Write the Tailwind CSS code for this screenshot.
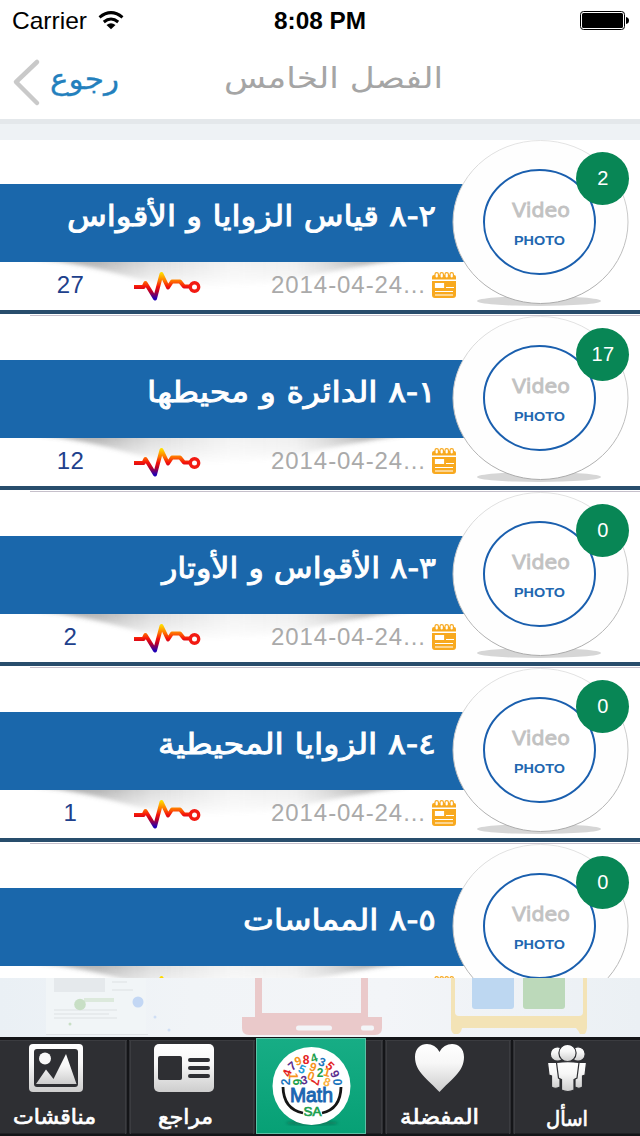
<!DOCTYPE html>
<html lang="ar">
<head>
<meta charset="utf-8">
<title>الفصل الخامس</title>
<script src="https://cdn.jsdelivr.net/npm/@tailwindcss/browser@4"></script>
</head>
<body class="w-[640px] h-[1136px] overflow-hidden bg-[#eef2f5] font-['Liberation_Sans',sans-serif]">
<div class="flex h-[1136px] flex-col overflow-hidden">
  <header class="h-[124px] shrink-0 border-b-[5px] border-[#e4e8eb] bg-white">
    <svg class="block" width="640" height="119">
      <text x="12" y="29" font-size="24" textLength="75" lengthAdjust="spacingAndGlyphs">Carrier</text>
      <g fill="none" stroke="#000" stroke-width="3"><path d="M99.500 17.300Q111 8 122.500 17.300M103.800 22Q111 16 118.200 22"/></g>
      <path d="M106.500 25Q111 21.500 115.500 25L111 29.200Z"/>
      <text x="274" y="29" font-size="24" font-weight="700" textLength="92" lengthAdjust="spacingAndGlyphs">8:08 PM</text>
      <rect x="580.500" y="11.500" width="44" height="18" rx="3" fill="none" stroke="#000"/>
      <rect x="582" y="13" width="41" height="15" rx="1.500"/><path d="M626 17q3 .5 3 3.500t-3 3.500z"/>
      <path d="M37 62L16 82L37 103" fill="none" stroke="#c9c9c9" stroke-width="4.500" stroke-linecap="round" stroke-linejoin="round"/>
      <g font-family="DejaVu Sans,sans-serif" direction="rtl">
        <text x="119" y="89" font-size="29" fill="#2380bd" stroke="#2380bd" stroke-width=".3" textLength="69" lengthAdjust="spacingAndGlyphs">رجوع</text>
        <text x="443" y="88" font-size="29" fill="#a5a5a5" textLength="219" lengthAdjust="spacingAndGlyphs">الفصل الخامس</text>
      </g>
    </svg>
  </header>
  <main id="list" class="mt-4 h-[838px] shrink-0 overflow-hidden bg-white"></main>
  <svg class="block shrink-0" width="640" height="59" viewBox="0 978 640 59">
    <defs><linearGradient id="bg"><stop stop-color="#eaf0f5"/><stop offset=".3" stop-color="#f1f4f7"/><stop offset=".6" stop-color="#f3f5f8"/><stop offset="1" stop-color="#ebf0f4"/></linearGradient></defs>
    <rect y="978" width="640" height="59" fill="url(#bg)"/>
    <rect x="46" y="978" width="100" height="56" fill="#f1f5f7"/><path d="M46 1034.500H148" stroke="#dfe2e5"/>
    <rect x="54" y="978" width="51" height="14" fill="#e5e9ec"/>
    <path d="M112 982h15M112 990h21M54 1010h63M54 1014h55M54 1018h63" stroke="#e3e7ea" stroke-width="1.500"/>
    <path d="M84 1000h30" stroke="#dce9dc" stroke-width="4"/>
    <circle cx="80" cy="1004.500" r="5.800" fill="#c8dfc5"/><circle cx="138" cy="1002" r="5.500" fill="#c3d7f4"/>
    <circle cx="70" cy="1024" r="1.500" fill="#c8dfc5"/><circle cx="155" cy="1017" r="1.500" fill="#cfdef5"/><circle cx="169" cy="1030" r="1.500" fill="#cfdef5"/>
    <path fill="#eac9ca" d="M255 978h7v35h99v-35h7v39h14v11q0 7-7 7H249q-7 0-7-7v-11h13z"/>
    <rect x="296" y="1025.500" width="36" height="5" rx="2.500" fill="#f3f5f8"/><rect x="361" y="1025.500" width="13" height="5" rx="2" fill="#f3f5f8"/>
    <path fill="#f3e3b6" d="M451 978h4v34q0 4 4 4h120q4 0 4-4v-34h4v50q-1 6-3 6h-4q-2-4-4-6H462q-1 5-4 6h-4q-3-2-3-6z"/>
    <path fill="#bdd7f1" d="M472 978h42v28q0 3-3 3h-36q-3 0-3-3z"/><path fill="#bcd9ba" d="M523 978h42v28q0 3-3 3h-36q-3 0-3-3z"/>
  </svg>
  <nav class="h-[99px] shrink-0">
    <svg class="block" width="640" height="99" viewBox="0 1037 640 99">
      <defs>
        <linearGradient id="w" x2="0" y2="1"><stop stop-color="#fff"/><stop offset=".4" stop-color="#f7f7f7"/><stop offset="1" stop-color="#cdcdcd"/></linearGradient>
        <linearGradient id="g" x2="0" y2="1"><stop stop-color="#17ad85"/><stop offset="1" stop-color="#07a075"/></linearGradient>
        <filter id="b"><feGaussianBlur stdDeviation="1.500"/></filter>
      </defs>
      <rect y="1037" width="640" height="99" fill="#2e2f33"/>
      <path d="M0 1038.500H640M0 1135H640" stroke="#141518" stroke-width="3"/><path d="M0 1040.500H640" stroke="#3b3c40"/>
      <path d="M128 1038v98M256 1038v98M384 1038v98M512 1038v98" stroke="#141518" stroke-width="2"/>
      <path d="M125.500 1040v94M130.500 1040v94M253.500 1040v94M381.500 1040v94M386.500 1040v94M509.500 1040v94M514.500 1040v94" stroke="#3b3c40"/>
      <rect x="256.500" y="1038.500" width="109" height="95" fill="url(#g)" stroke="#5cc0a5"/>
      <ellipse cx="312" cy="1123" rx="26" ry="2.500" fill="#087b5b" filter="url(#b)"/>
      <circle cx="311.500" cy="1086" r="39" fill="#fff"/>
      <g id="nums" font-family="Liberation Sans,sans-serif" font-weight="700" text-anchor="middle"></g>
      <path d="M283 1087Q283.500 1109 303 1113M341 1087Q340.500 1109 322 1113" fill="none" stroke="#151515" stroke-width="2.800"/>
      <text x="290" y="1102" font-size="20" font-family="Liberation Sans,sans-serif" fill="#1b66b1" stroke="#1b66b1" stroke-width="1" textLength="43" lengthAdjust="spacingAndGlyphs">Math</text>
      <text x="303.500" y="1116" font-size="13" font-family="Liberation Sans,sans-serif" fill="#1da04f" stroke="#1da04f" stroke-width=".7" textLength="18" lengthAdjust="spacingAndGlyphs">SA</text>
      <rect x="29" y="1044" width="54" height="48" rx="4" fill="url(#w)"/><rect x="34" y="1049" width="44" height="38" rx="3" fill="#2e2f33"/>
      <circle cx="45" cy="1058.500" r="6" fill="#f8f8f8"/><path d="M36 1084L46 1069.500L53.500 1079L66 1054L76.500 1084Z" fill="url(#w)"/>
      <rect x="154" y="1044" width="60" height="48" rx="5" fill="url(#w)"/><rect x="158" y="1056" width="24" height="24" rx="2" fill="#2e2f33"/>
      <path d="M190 1060h18M190 1068h18M190 1076h18" stroke="#2e2f33" stroke-width="4" stroke-linecap="round"/>
      <path d="M439.500 1092C428 1079 415 1072 415 1057C415 1041 434 1040 439.500 1052C445 1040 464 1041 464 1057C464 1072 451 1079 439.500 1092Z" fill="url(#w)"/>
      <g fill="url(#w)" stroke="#2e2f33" stroke-width="1.200">
        <circle cx="557.500" cy="1054" r="7.200"/><circle cx="578" cy="1054" r="7.200"/>
        <path d="M547.500 1062.500H560V1087Q556 1089.500 551.500 1087V1076L549 1075ZM586.500 1062.500H575V1087Q579 1089.500 582.500 1087V1076L585 1075Z"/>
        <circle cx="567.500" cy="1053" r="8.600"/>
        <path d="M556.500 1062.500Q568 1061 579 1062.500L577 1078L574 1079.500V1090Q568 1093 561.500 1090V1079.500L558.500 1078Z"/>
      </g>
      <g font-family="DejaVu Sans,sans-serif" direction="rtl" fill="#fff" stroke="#fff" stroke-width=".7" font-size="21">
        <text x="96" y="1124" textLength="83" lengthAdjust="spacingAndGlyphs">مناقشات</text>
        <text x="213" y="1124" textLength="55" lengthAdjust="spacingAndGlyphs">مراجع</text>
        <text x="479" y="1124" textLength="79" lengthAdjust="spacingAndGlyphs">المفضلة</text>
        <text x="588" y="1126" textLength="42" lengthAdjust="spacingAndGlyphs">اسأل</text>
      </g>
    </svg>
  </nav>
</div>
<svg width="0" height="0" class="absolute">
  <defs>
    <linearGradient id="heat" gradientUnits="userSpaceOnUse" x1="0" y1="132" x2="0" y2="160"><stop stop-color="#ffe800"/><stop offset=".3" stop-color="#ff7a00"/><stop offset=".52" stop-color="#f5140a"/><stop offset=".7" stop-color="#b8002c"/><stop offset=".95" stop-color="#2100b4"/></linearGradient>
    <linearGradient id="sh" gradientUnits="userSpaceOnUse" x1="35" y1="0" x2="430" y2="0"><stop stop-color="#555" stop-opacity=".5"/><stop offset=".17" stop-color="#555" stop-opacity=".42"/><stop offset=".3" stop-color="#666" stop-opacity=".22"/><stop offset=".5" stop-color="#888" stop-opacity=".1"/><stop offset=".66" stop-color="#888" stop-opacity=".14"/><stop offset=".84" stop-color="#555" stop-opacity=".42"/><stop offset="1" stop-color="#555" stop-opacity=".4"/></linearGradient>
    <linearGradient id="fade" gradientUnits="userSpaceOnUse" x1="0" y1="122" x2="0" y2="150"><stop stop-color="#fff"/><stop offset=".45" stop-color="#999"/><stop offset="1" stop-color="#000"/></linearGradient>
    <mask id="under" maskUnits="userSpaceOnUse" x="0" y="122" width="640" height="48"><rect y="122" width="640" height="48" fill="url(#fade)"/></mask>
    <filter id="soft" x="-10%" y="-60%" width="120%" height="220%"><feGaussianBlur stdDeviation="2"/></filter>
    <g id="row">
      <g mask="url(#under)"><path d="M32 118Q85 124 132 138Q160 146 210 148Q270 146 310 136Q370 124 412 118Z" fill="url(#sh)" filter="url(#soft)"/></g>
      <rect y="44" width="480" height="78" fill="#1a67ab"/>
      <path d="M134 147H143.500L145.500 143L155 158.500L161.500 134L168 147.500L172 141.500H180L184 146.500H190" fill="none" stroke="url(#heat)" stroke-width="4" stroke-linejoin="round"/>
      <circle cx="194.500" cy="147" r="4.200" fill="none" stroke="#f21a12" stroke-width="3.400"/>
      <path d="M434 135h20q2 0 2 2v2.500h-24v-2.500q0-2 2-2zM432 141h24v14q0 3-3 3h-18q-3 0-3-3z" fill="#f8a91f"/>
      <path d="M435.500 143.500h8v4h-8zM446 147.500h8M435 151.500h18M435 155h18" stroke="#fff" stroke-width="1.200" fill="#fff"/>
      <g fill="#fff" stroke="#f8a91f" stroke-width="1.200"><rect x="435" y="132.600" width="3.400" height="5.500" rx="1.700"/><rect x="440" y="132.600" width="3.400" height="5.500" rx="1.700"/><rect x="445" y="132.600" width="3.400" height="5.500" rx="1.700"/><rect x="450" y="132.600" width="3.400" height="5.500" rx="1.700"/></g>
      <ellipse cx="539" cy="161" rx="62" ry="5" fill="#d6d6d6"/>
      <ellipse cx="540.500" cy="82" rx="87.500" ry="81.500" fill="#fefefe" stroke="url(#rim)"/>
      <ellipse cx="539.500" cy="82" rx="55.500" ry="52" fill="#fff" stroke="#1a5fae" stroke-width="2"/>
      <circle cx="602.500" cy="38.500" r="26.500" fill="#088655"/>
      <rect y="170" width="640" height="4" fill="#284d6c"/><path d="M30 175.500H640" stroke="#c6c0cb"/>
    </g>
    <linearGradient id="rim" x2="0" y2="1"><stop stop-color="#e4e4e4"/><stop offset="1" stop-color="#aaa"/></linearGradient>
  </defs>
</svg>
<script>
const rows=[["٢-٨ قياس الزوايا و الأقواس",67,27,2],["١-٨ الدائرة و محيطها",147,12,17],["٣-٨ الأقواس و الأوتار",162,2,0],["٤-٨ الزوايا المحيطية",158,1,0],["٥-٨ المماسات",243,"",0]];
document.getElementById("list").innerHTML=rows.map(([t,x,n,b])=>`<svg class="block" width="640" height="176"><use href="#row"/>
<text x="436" y="86" direction="rtl" font-family="DejaVu Sans,sans-serif" font-size="29" fill="#fff" stroke="#fff" stroke-width=".9" textLength="${436-x}" lengthAdjust="spacingAndGlyphs">${t}</text>
${n===""?"":`<text x="70.500" y="153" text-anchor="middle" font-size="24" letter-spacing=".5" fill="#20408c">${n}</text>
<text x="271" y="153" font-size="24" fill="#aaa" textLength="154">2014-04-24...</text>`}
<text x="512" y="77" font-family="DejaVu Sans,sans-serif" font-size="19.500" fill="#c2c2c2" stroke="#c2c2c2" stroke-width=".8" textLength="58" lengthAdjust="spacingAndGlyphs">Video</text>
<text x="514" y="104.500" font-size="13.500" font-weight="700" fill="#2267b0" textLength="51" lengthAdjust="spacingAndGlyphs">PHOTO</text>
<text x="603" y="45" text-anchor="middle" font-size="20" letter-spacing=".5" fill="#fff">${b}</text></svg>`).join("");
const nums=[[2,286,1082,-90,"#1c75bc"],[4,287,1073,-70,"#e31e24"],[7,292,1066,-40,"#5b2d8e"],[6,298,1061,160,"#f7941d"],[8,306,1060,0,"#e31e24"],[4,314,1058,-20,"#20a04b"],[3,322,1062,20,"#1c75bc"],[5,330,1066,45,"#e31e24"],[9,335,1074,65,"#5b2d8e"],[0,337,1082,90,"#1c75bc"],[5,302,1069,25,"#1c9cd8"],[9,313,1067,20,"#f7941d"],[2,320,1073,0,"#20a04b"],[1,327,1072,15,"#f7941d"],[8,327,1082,20,"#fbb040"],[1,293,1076,90,"#f7941d"],[6,297,1082,90,"#20a04b"],[3,304,1080,-10,"#5b2d8e"],[0,311,1076,20,"#f7941d"],[7,315,1082,100,"#e31e24"]];
document.getElementById("nums").innerHTML=nums.map(([d,x,y,r,c])=>`<text x="${x}" y="${y}" dy="4.200" font-size="12" fill="${c}" transform="rotate(${r} ${x} ${y})">${d}</text>`).join("");
</script>
</body>
</html>
